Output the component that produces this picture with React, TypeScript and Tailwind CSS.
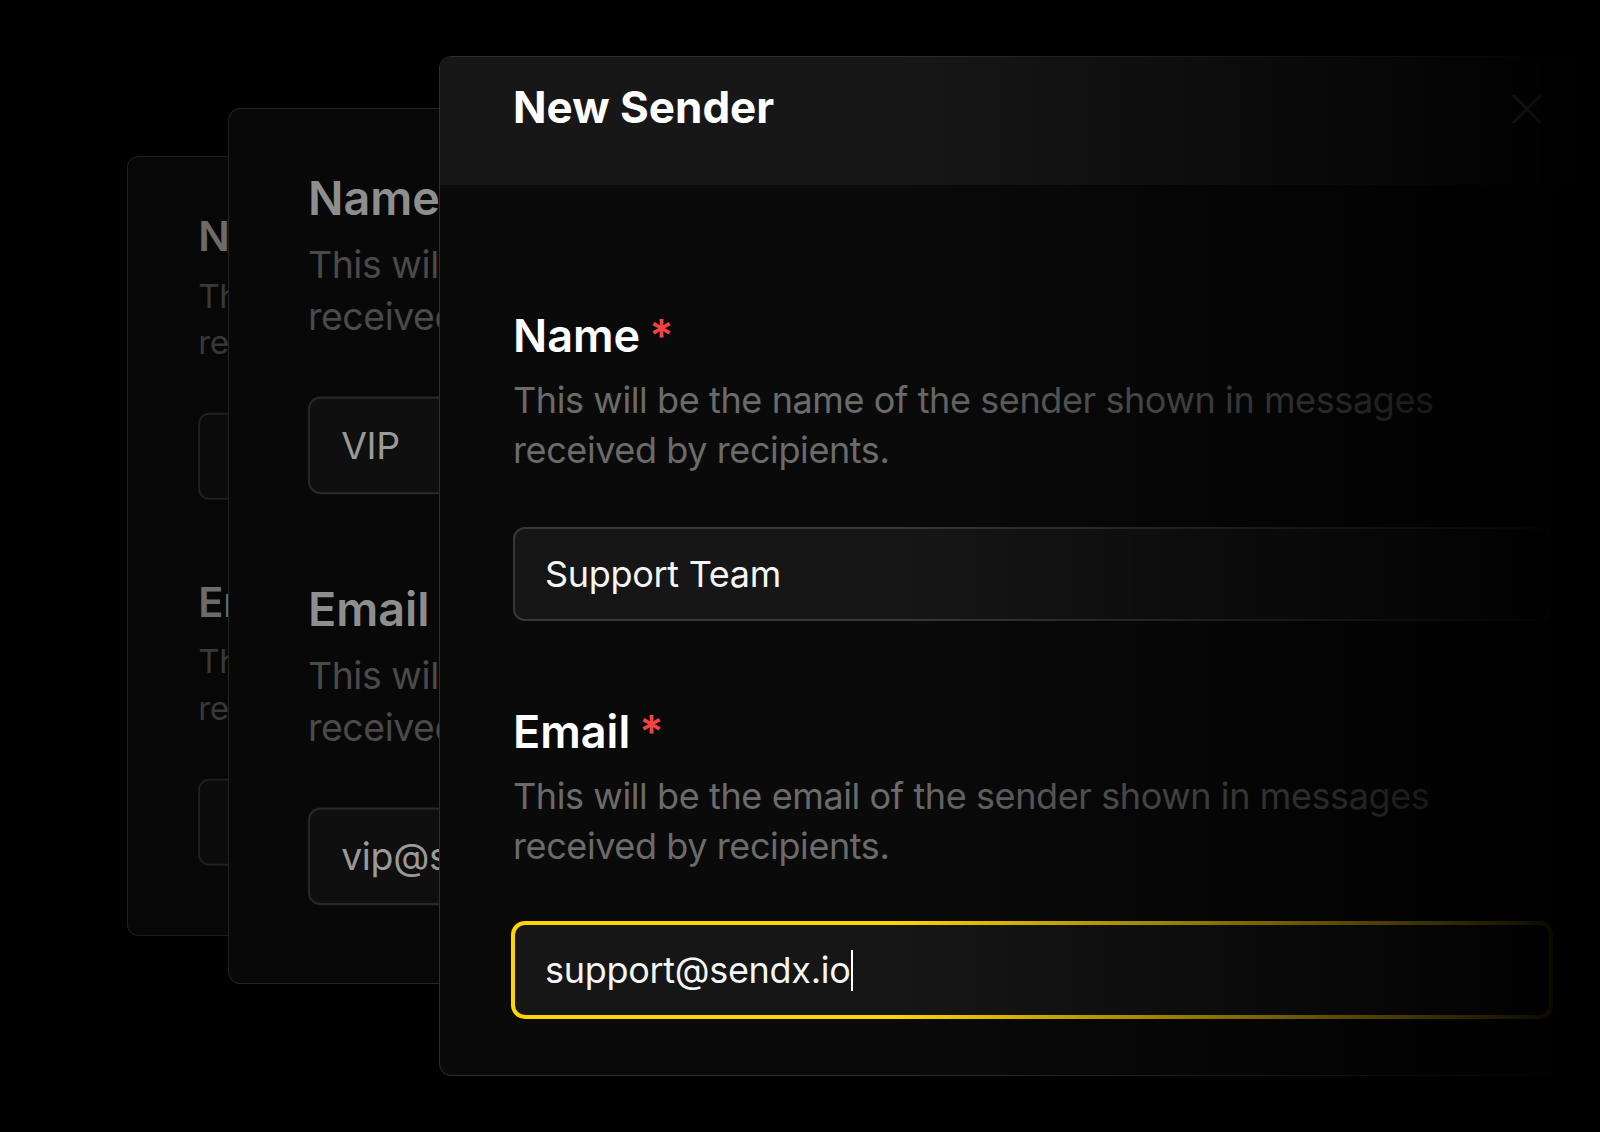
import React from 'react';

type Tone = {
  label: string;
  desc: string;
  inputBg: string;
  inputBorder: string;
  value: string;
};

const tones: Record<'front' | 'mid' | 'back', Tone> = {
  front: {
    label: 'text-white',
    desc: 'text-[#6b6b6b]',
    inputBg: 'bg-[#161616]',
    inputBorder: 'border-[#383838]',
    value: 'text-[#f5f5f5]',
  },
  mid: {
    label: 'text-[#8e8e8e]',
    desc: 'text-[#4a4a4a]',
    inputBg: 'bg-[#0f0f0f]',
    inputBorder: 'border-[#272727]',
    value: 'text-[#9a9a9a]',
  },
  back: {
    label: 'text-[#6b6b6b]',
    desc: 'text-[#383838]',
    inputBg: 'bg-[#0b0b0b]',
    inputBorder: 'border-[#202020]',
    value: 'text-[#5e5e5e]',
  },
};

interface FieldProps {
  label: string;
  what: string;
  value: string;
  tone: Tone;
  required?: boolean;
  focused?: boolean;
}

const Field: React.FC<FieldProps> = ({ label, what, value, tone, required, focused }) => {
  return (
    <div className="flex flex-col">
      <div className={`flex items-start text-[45px] font-semibold leading-[54px] ${tone.label}`}>
        <span>{label}</span>
        {required && <span className="ml-[9px] text-[#ef4444]">*</span>}
      </div>
      <p className={`mt-3 whitespace-nowrap text-[36px] leading-[50px] tracking-[-0.4px] ${tone.desc}`}>
        This will be the {what} of the sender shown in messages
        <br />
        received by recipients.
      </p>
      <div
        className={`mt-[52px] flex h-[94px] items-center overflow-hidden rounded-xl border-2 px-[30px] text-[36px] tracking-[-0.3px] ${tone.inputBg} ${
          focused ? 'border-[#ffd400] ring-2 ring-[#ffd400]' : tone.inputBorder
        } ${tone.value}`}
      >
        <span className="whitespace-nowrap">{value}</span>
        {focused && <span className="ml-px h-[41px] w-[2px] bg-white" />}
      </div>
    </div>
  );
};

// cards behind the dialog: only their left strip shows, the rest is clipped
const BackCard: React.FC<{ name: string; email: string; tone: Tone; className: string }> = ({
  name,
  email,
  tone,
  className,
}) => {
  return (
    <div
      className={`absolute flex h-[844px] w-[420px] origin-top-left flex-col gap-[84px] overflow-hidden rounded-xl border border-[#242424] pl-[76px] pt-[59px] ${className}`}
    >
      <Field label="Name" what="name" value={name} tone={tone} />
      <Field label="Email" what="email" value={email} tone={tone} />
    </div>
  );
};

export default function App() {
  return (
    <div className="relative h-[1132px] w-[1600px] overflow-hidden bg-black font-[Inter,sans-serif]">
      <BackCard
        name="Marketing"
        email="hello@sendx.io"
        tone={tones.back}
        className="left-[127px] top-[156px] scale-[0.924] bg-[#070707]"
      />
      <BackCard
        name="VIP"
        email="vip@sendx.io"
        tone={tones.mid}
        className="left-[228px] top-[108px] scale-[1.038] bg-[#080808]"
      />

      <div className="absolute left-[439px] top-[56px] flex h-[1020px] w-[1186px] flex-col overflow-hidden rounded-xl border border-[#2e2e2e] bg-[#0a0a0a]">
        <div className="flex h-[128px] shrink-0 items-start justify-between bg-[#171717] pl-[73px] pr-[82px] pt-[28px]">
          <h2 className="text-[44px] font-bold leading-none text-white">New Sender</h2>
          <svg
            className="mt-[9px] h-[30px] w-[30px] text-[#b0b0b0]"
            viewBox="0 0 30 30"
            fill="none"
            stroke="currentColor"
            strokeWidth="3"
            strokeLinecap="round"
          >
            <path d="M2 2L28 28M28 2L2 28" />
          </svg>
        </div>
        <div className="flex flex-col gap-[84px] px-[73px] pt-[124px]">
          <Field label="Name" what="name" value="Support Team" tone={tones.front} required />
          <Field label="Email" what="email" value="support@sendx.io" tone={tones.front} required focused />
        </div>
      </div>

      <div className="pointer-events-none absolute inset-0 bg-linear-to-r from-transparent from-[56%] to-black to-[99%]" />
    </div>
  );
}
